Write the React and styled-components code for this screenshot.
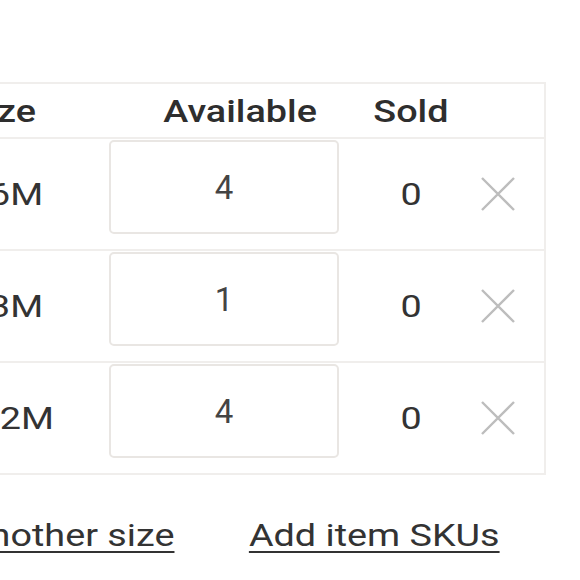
import React from "react";
import styled, { createGlobalStyle, css } from "styled-components";

const GlobalStyle = createGlobalStyle`
  body {
    margin: 0;
    background: #fff;
    font-family: Roboto, "Liberation Sans", sans-serif;
    color: #333;
  }
`;

// the type in this view is drawn a bit wide
const wide = css`
  display: inline-block;
  transform: scaleX(1.18);
  transform-origin: center;
`;

const sizes = [
  { id: 1, label: "3-6M", available: 4, sold: 0 },
  { id: 2, label: "0-3M", available: 1, sold: 0 },
  { id: 3, label: "6-12M", available: 4, sold: 0 },
];

const CloseIcon = () => (
  <svg width="34" height="34" viewBox="0 0 34 34">
    <path
      d="M1 1 L33 33 M33 1 L1 33"
      stroke="#bdbdbd"
      strokeWidth="2.4"
      fill="none"
    />
  </svg>
);

const App = () => {
  return (
    <>
      <GlobalStyle />
      <Page>
        <Table>
          <HeaderRow>
            <HeadCell>
              <Text>Size</Text>
            </HeadCell>
            <HeadCell>
              <Text>Available</Text>
            </HeadCell>
            <HeadCell>
              <Text>Sold</Text>
            </HeadCell>
            <HeadCell />
          </HeaderRow>
          {sizes.map((size) => (
            <Row key={size.id}>
              <Cell>
                <Text>{size.label}</Text>
              </Cell>
              <InputCell>
                <QtyInput readOnly defaultValue={size.available} />
              </InputCell>
              <Cell>
                <Text>{size.sold}</Text>
              </Cell>
              <Cell>
                <RemoveButton>
                  <CloseIcon />
                </RemoveButton>
              </Cell>
            </Row>
          ))}
        </Table>
        <Links>
          <LinkText>Add another size</LinkText>
          <LinkText>Add item SKUs</LinkText>
        </Links>
      </Page>
    </>
  );
};

const Page = styled.div`
  padding-top: 82px;
  margin-left: -111px;
  width: 657px;
`;

const Table = styled.div`
  border: 2px solid #f0eeec;
  border-bottom: none;
`;

const columns = `218px 262px 80px 1fr`;

const HeaderRow = styled.div`
  display: grid;
  grid-template-columns: ${columns};
  height: 53px;
  border-bottom: 2px solid #f0eeec;
  align-items: center;
`;

const HeadCell = styled.div`
  text-align: center;
  font-size: 32px;
  font-weight: 500;
  color: #2e2e2e;
`;

const Text = styled.span`
  ${wide}
`;

const Row = styled.div`
  display: grid;
  grid-template-columns: ${columns};
  height: 110px;
  border-bottom: 2px solid #f0eeec;
  align-items: center;
`;

const Cell = styled.div`
  display: flex;
  justify-content: center;
  align-items: center;
  font-size: 32px;
  color: #333;
`;

const InputCell = styled.div`
  display: flex;
  align-items: center;
  margin-bottom: 14px;
`;

const QtyInput = styled.input`
  box-sizing: border-box;
  width: 230px;
  height: 94px;
  border: 2px solid #e9e6e3;
  border-radius: 5px;
  background: #fff;
  font-family: Roboto, "Liberation Sans", sans-serif;
  font-size: 33px;
  color: #444;
  text-align: center;
  outline: none;
  padding: 0;
`;

const RemoveButton = styled.button`
  display: flex;
  padding: 0;
  border: none;
  background: none;
  cursor: pointer;
`;

const Links = styled.div`
  display: flex;
  justify-content: flex-end;
  gap: 115px;
  padding-right: 66px;
  margin-top: 40px;
`;

const LinkText = styled.a`
  ${wide}
  font-size: 32px;
  line-height: 40px;
  color: #333;
  text-decoration: underline;
  text-decoration-thickness: 2px;
  text-underline-offset: 5px;
  cursor: pointer;
`;

export default App;
